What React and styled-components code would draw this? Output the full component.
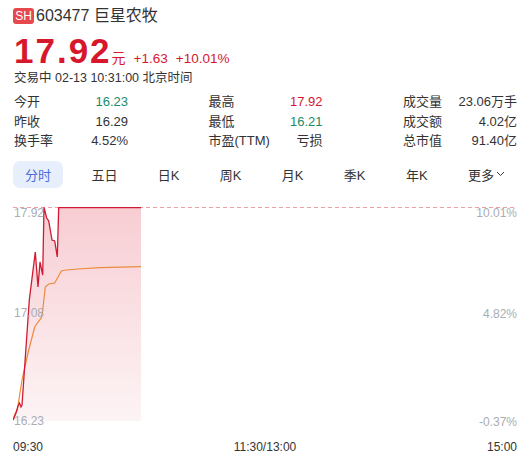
import React from 'react'
import styled, { createGlobalStyle } from 'styled-components';

const GlobalStyle = createGlobalStyle`
  body {
    margin: 0;
    background: #fff;
    font-family: "Liberation Sans", Arial, "Noto Sans CJK SC", sans-serif;
    color: #333;
  }
`;

const Page = styled.div`
  width: 523px;
  height: 457px;
  padding: 8px 6px 0 13px;
  box-sizing: border-box;
  overflow: hidden;
`;

const TitleRow = styled.div`
  display: flex;
  align-items: center;
  height: 16px;
`;

const Badge = styled.span`
  display: inline-flex;
  align-items: center;
  justify-content: center;
  width: 21px;
  height: 16px;
  border-radius: 3px;
  background: #e5484d;
  color: #fff;
  font-size: 12px;
  line-height: 16px;
  margin-right: 2px;
`;

const StockName = styled.span`
  font-size: 16px;
  line-height: 16px;
  color: #333;
`;

const PriceRow = styled.div`
  display: flex;
  align-items: baseline;
  margin-top: 12px;
  height: 30px;
`;

const Price = styled.span`
  font-size: 35px;
  font-weight: bold;
  letter-spacing: 2px;
  line-height: 30px;
  color: #d6172c;
  margin-left: 1px;
`;

const Unit = styled.span`
  font-size: 14px;
  color: #d6172c;
  margin-right: 8px;
`;

const Change = styled.span`
  font-size: 13.5px;
  color: #d6172c;
  margin-right: 8px;
`;

const TimeLine = styled.div`
  font-size: 12.5px;
  line-height: 14px;
  margin-top: 5px;
  margin-left: 1px;
  color: #333;
`;

const StatsGrid = styled.div`
  display: grid;
  grid-template-columns: repeat(3, 114px);
  justify-content: space-between;
  row-gap: 5px;
  margin-top: 10px;
  margin-left: 1px;
`;

const Stat = styled.div`
  display: flex;
  justify-content: space-between;
  font-size: 13px;
  line-height: 14.5px;
`;

const StatLabel = styled.span`
  color: #333;
`;

const StatValue = styled.span`
  color: ${p => p.$tone === 'up' ? '#d6172c' : p.$tone === 'down' ? '#1b8a6b' : '#333'};
`;

const Tabs = styled.div`
  display: flex;
  justify-content: space-between;
  margin-top: 12px;
`;

const Tab = styled.div`
  display: flex;
  align-items: center;
  justify-content: center;
  height: 27px;
  padding: 0 12px;
  border-radius: 7px;
  font-size: 13px;
  background: ${p => p.$active ? '#e7effd' : 'transparent'};
  color: ${p => p.$active ? '#4a6bd8' : '#333'};
`;

const Chart = styled.div`
  position: relative;
  height: 214px;
  margin-top: 19px;
`;

const AxisLabel = styled.span`
  position: absolute;
  font-size: 12px;
  line-height: 12px;
  color: #a9adb4;
  ${p => p.$right ? 'right: 0;' : 'left: 1px;'}
  top: ${p => p.$top}px;
`;

const TimeAxis = styled.div`
  display: flex;
  justify-content: space-between;
  margin-top: 20px;
  font-size: 12px;
  line-height: 12px;
  color: #333;
`;

const stats = [
  ['今开', '16.23', 'down'], ['最高', '17.92', 'up'], ['成交量', '23.06万手'],
  ['昨收', '16.29'], ['最低', '16.21', 'down'], ['成交额', '4.02亿'],
  ['换手率', '4.52%'], ['市盈(TTM)', '亏损'], ['总市值', '91.40亿'],
];

const tabs = ['分时', '五日', '日K', '周K', '月K', '季K', '年K'];

// chart coords: x = minutes scaled to 504px, y = 0 at 17.92, 213 at 16.23
const pricePts = [
  [0, 213], [3, 206], [5, 199], [6.5, 196], [8, 200], [9, 198], [16.3, 93], [22.3, 45],
  [25, 80], [27, 55], [29.7, 68], [31, 0.5], [33.7, 11], [35.7, 14], [39, 33], [41.7, 34],
  [44.3, 50], [45.7, 0.5], [128, 0.5],
];

const avgPts = [
  [0.3, 213], [2.3, 206], [4.3, 203], [9, 173], [15, 146], [21.7, 120], [25, 115], [28.3, 111],
  [29.7, 103], [32.3, 80], [35.7, 77], [41.7, 76], [45, 70], [48.3, 64], [53.3, 63], [65, 62],
  [87, 60.7], [128, 59.7],
];

const toPath = pts => pts.map((p, i) => (i ? 'L' : 'M') + p[0] + ',' + p[1]).join(' ');

function IntradayChart() {
  return (
    <Chart>
      <svg width="504" height="214" viewBox="0 0 504 214" style={{ display: 'block' }}>
        <defs>
          <linearGradient id="fill" x1="0" y1="0" x2="0" y2="1">
            <stop offset="0" stopColor="#f7cdd3" />
            <stop offset="1" stopColor="#fdf4f5" />
          </linearGradient>
        </defs>
        <line x1="0" y1="0.5" x2="504" y2="0.5" stroke="#ee9ea6" strokeWidth="1" strokeDasharray="4 3" />
        <path d={toPath(pricePts) + ' L128,214 L0,214 Z'} fill="url(#fill)" />
        <path d={toPath(avgPts)} fill="none" stroke="#ec8a3c" strokeWidth="1.2" />
        <path d={toPath(pricePts)} fill="none" stroke="#cf1a33" strokeWidth="1.3" />
      </svg>
      <AxisLabel $top={0}>17.92</AxisLabel>
      <AxisLabel $top={100}>17.08</AxisLabel>
      <AxisLabel $top={208}>16.23</AxisLabel>
      <AxisLabel $right $top={0}>10.01%</AxisLabel>
      <AxisLabel $right $top={101}>4.82%</AxisLabel>
      <AxisLabel $right $top={209}>-0.37%</AxisLabel>
    </Chart>
  );
}

export default function App() {
  return (
    <Page>
      <GlobalStyle />
      <TitleRow>
        <Badge>SH</Badge>
        <StockName>603477 巨星农牧</StockName>
      </TitleRow>
      <PriceRow>
        <Price>17.92</Price>
        <Unit>元</Unit>
        <Change>+1.63</Change>
        <Change>+10.01%</Change>
      </PriceRow>
      <TimeLine>交易中 02-13 10:31:00 北京时间</TimeLine>
      <StatsGrid>
        {stats.map(([label, value, tone]) => (
          <Stat key={label}>
            <StatLabel>{label}</StatLabel>
            <StatValue $tone={tone}>{value}</StatValue>
          </Stat>
        ))}
      </StatsGrid>
      <Tabs>
        {tabs.map((t, i) => (
          <Tab key={t} $active={i === 0}>{t}</Tab>
        ))}
        <Tab>
          更多
          <svg width="9" height="6" viewBox="0 0 9 6" style={{ marginLeft: 2 }}>
            <path d="M1 1 L4.5 4.5 L8 1" fill="none" stroke="#333" strokeWidth="1" />
          </svg>
        </Tab>
      </Tabs>
      <IntradayChart />
      <TimeAxis>
        <span>09:30</span>
        <span>11:30/13:00</span>
        <span>15:00</span>
      </TimeAxis>
    </Page>
  );
}
